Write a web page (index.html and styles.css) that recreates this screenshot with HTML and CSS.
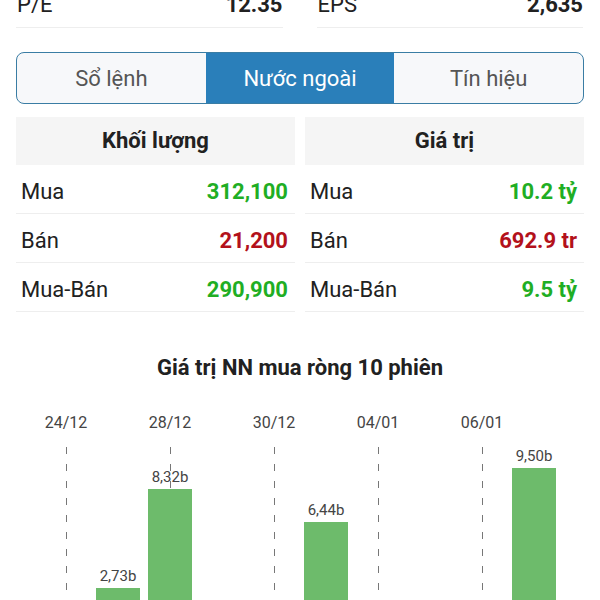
FILE: index.html
```html
<!DOCTYPE html>
<html lang="vi">
<head>
  <meta charset="UTF-8" />
  <meta name="viewport" content="width=device-width, initial-scale=1.0"/>
  <title>Nước ngoài</title>
  <link rel="stylesheet" href="styles.css">
</head>
<body>
  <div class="page">
    <div class="stats">
      <div class="stat"><span>P/E</span><b>12.35</b></div>
      <div class="stat"><span>EPS</span><b>2,635</b></div>
    </div>

    <div class="tabs">
      <div class="tab">Sổ lệnh</div>
      <div class="tab active">Nước ngoài</div>
      <div class="tab">Tín hiệu</div>
    </div>

    <div class="tables">
      <div class="table">
        <div class="table-head">Khối lượng</div>
        <div class="row"><span>Mua</span><b class="up">312,100</b></div>
        <div class="row"><span>Bán</span><b class="down">21,200</b></div>
        <div class="row"><span>Mua-Bán</span><b class="up">290,900</b></div>
      </div>
      <div class="table">
        <div class="table-head">Giá trị</div>
        <div class="row"><span>Mua</span><b class="up">10.2 tỷ</b></div>
        <div class="row"><span>Bán</span><b class="down">692.9 tr</b></div>
        <div class="row"><span>Mua-Bán</span><b class="up">9.5 tỷ</b></div>
      </div>
    </div>

    <div class="chart-title">Giá trị NN mua ròng 10 phiên</div>

    <div class="chart">
      <div class="slot grid"><div class="date">24/12</div><div class="plot"></div></div>
      <div class="slot"><div class="date"></div><div class="plot"><div class="val">2,73b</div><div class="bar" style="height: 49px"></div></div></div>
      <div class="slot grid"><div class="date">28/12</div><div class="plot"><div class="val">8,32b</div><div class="bar" style="height: 148px"></div></div></div>
      <div class="slot"><div class="date"></div><div class="plot"></div></div>
      <div class="slot grid"><div class="date">30/12</div><div class="plot"></div></div>
      <div class="slot"><div class="date"></div><div class="plot"><div class="val">6,44b</div><div class="bar" style="height: 115px"></div></div></div>
      <div class="slot grid"><div class="date">04/01</div><div class="plot"></div></div>
      <div class="slot"><div class="date"></div><div class="plot"></div></div>
      <div class="slot grid"><div class="date">06/01</div><div class="plot"></div></div>
      <div class="slot"><div class="date"></div><div class="plot"><div class="val">9,50b</div><div class="bar" style="height: 169px"></div></div></div>
    </div>
  </div>
</body>
</html>
```

FILE: styles.css
```css
html, body {
  overflow: hidden;
}

body {
  margin: 0;
  font-family: Roboto, "Noto Sans", sans-serif;
  background: #fff;
  color: #212121;
}

.page {
  padding: 0 16px;
}

/* top stats (cut off) */
.stats {
  display: grid;
  grid-template-columns: 1fr 1fr;
  column-gap: 34px;
  margin-top: -8px;
  padding-right: 1px;
}

.stat {
  display: flex;
  justify-content: space-between;
  font-size: 22px;
  line-height: 26px;
  padding: 0 0 9px 1px;
  border-bottom: 1px solid #eeeeee;
}

.stat b {
  font-weight: bold;
}

/* tabs */
.tabs {
  display: flex;
  margin-top: 24px;
  height: 50px;
  border: 1.5px solid #3a7da4;
  border-radius: 8px;
  overflow: hidden;
  background: #f7f8fa;
}

.tab {
  flex: 1;
  display: flex;
  align-items: center;
  justify-content: center;
  font-size: 22px;
  color: #555;
}

.tab.active {
  background: #2a7fba;
  color: #fff;
}

/* tables */
.tables {
  display: grid;
  grid-template-columns: 1fr 1fr;
  column-gap: 10px;
  margin-top: 13px;
}

.table-head {
  height: 48px;
  line-height: 48px;
  text-align: center;
  font-size: 22px;
  font-weight: bold;
  background: #f5f5f5;
}

.row {
  display: flex;
  justify-content: space-between;
  align-items: center;
  height: 44px;
  padding: 4px 7px 0 5px;
  font-size: 22px;
  border-bottom: 1px solid #eeeeee;
}

.row b {
  font-weight: bold;
}

.up { color: #1fae24; }
.down { color: #b3111b; }

/* chart */
.chart-title {
  margin-top: 44px;
  text-align: center;
  font-size: 22px;
  line-height: 24px;
  font-weight: bold;
}

.chart {
  display: grid;
  grid-template-columns: repeat(10, 52px);
  margin: 33px 0 0 24px;
}

.slot {
  display: flex;
  flex-direction: column;
  align-items: center;
}

.date {
  height: 20px;
  line-height: 20px;
  font-size: 16px;
  color: #444;
  margin-bottom: 14px;
  white-space: nowrap;
}

.plot {
  position: relative;
  width: 100%;
  height: 190px;
  display: flex;
  flex-direction: column;
  justify-content: flex-end;
  align-items: center;
}

.grid .plot {
  background: repeating-linear-gradient(to bottom, #777 0 7px, transparent 7px 17px) center top / 1px 100% no-repeat;
}

.val {
  font-size: 15px;
  line-height: 16px;
  color: #444;
  margin-bottom: 4px;
}

.bar {
  width: 44px;
  background: #6dbb6b;
}
```
